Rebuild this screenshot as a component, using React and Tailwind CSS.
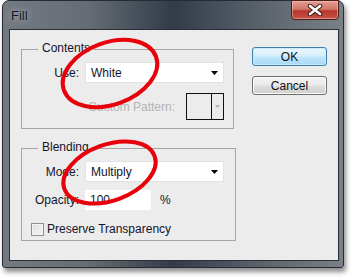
import React from 'react';

function Dropdown({ value }) {
  return (
    <div className="w-[139px] h-[21px] bg-white border border-[#e2e2e2] flex items-center pl-[5px] pr-[5px]">
      <span className="flex-1 text-[12px] leading-[14px] text-[#14142a]">{value}</span>
      <svg width="7" height="4" viewBox="0 0 7 4">
        <path d="M0 0 H7 L3.5 4 Z" fill="#000" />
      </svg>
    </div>
  );
}

function Group({ title, className, children }) {
  return (
    <div className={`relative border border-[#a6a6a6] ${className}`}>
      <span className="absolute -top-[9px] left-[16px] px-[4px] bg-[#ececec] text-[12px] leading-[14px] text-[#14142a]">
        {title}
      </span>
      {children}
    </div>
  );
}

export default function App() {
  return (
    <div className="relative w-[354px] h-[278px] bg-white overflow-hidden font-['Liberation_Sans',Arial,sans-serif]">
      <div className="ml-[2px] w-[342px] h-[268px] rounded-t-[7px] rounded-b-[3px] border border-[#262b31] bg-[linear-gradient(90deg,#747a82_0%,#656c75_25%,#323c47_50%,#59616b_75%,#7a8087_100%)] shadow-[2px_4px_5px_rgba(0,0,0,0.45)] flex flex-col">
        {/* title bar */}
        <div className="h-[28px] flex items-start">
          <span className="pl-[8px] pt-[7px] text-[13px] leading-[15px] text-[#16162a] [text-shadow:0_0_6px_rgba(220,225,230,0.9)]">
            Fill
          </span>
          <div className="ml-auto mr-[4px] -mt-[1px] w-[48px] h-[20px] rounded-b-[4px] border border-[#4a201c] bg-[linear-gradient(180deg,#e39d92_0%,#d2776b_45%,#b8362b_55%,#c45448_100%)] flex items-center justify-center shadow-[inset_0_0_0_1px_rgba(255,200,190,0.5)]">
            <svg width="16" height="12" viewBox="0 0 16 12">
              <path d="M3 2 L13 10 M13 2 L3 10" stroke="#3a1512" strokeWidth="4.5" strokeLinecap="round" />
              <path d="M3 2 L13 10 M13 2 L3 10" stroke="#fff" strokeWidth="2.6" strokeLinecap="round" />
            </svg>
          </div>
        </div>

        {/* content */}
        <div className="ml-[6px] w-[330px] h-[232px] border border-[#2a2f35] bg-[#ececec] flex">
          <div className="pl-[11px] pt-[19px] flex flex-col gap-[19px]">
            <Group title="Contents" className="w-[213px] h-[80px]">
              <div className="flex items-center pt-[12px]">
                <span className="w-[57px] text-right text-[12px] text-[#14142a]">Use:</span>
                <div className="ml-[6px]">
                  <Dropdown value="White" />
                </div>
              </div>
              <div className="flex items-center justify-end pr-[9px] mt-[10px] gap-[11px]">
                <span className="text-[12px] text-[#b4b4b4]">Custom Pattern:</span>
                <div className="w-[38px] h-[27px] border border-[#111] flex">
                  <div className="w-[25px] border-r border-[#111]"></div>
                  <div className="flex-1 flex items-center justify-center">
                    <svg width="5" height="3" viewBox="0 0 5 3">
                      <path d="M0 0 H5 L2.5 3 Z" fill="#b0b0b0" />
                    </svg>
                  </div>
                </div>
              </div>
            </Group>

            <Group title="Blending" className="w-[215px] h-[93px]">
              <div className="flex items-center pt-[12px]">
                <span className="w-[57px] text-right text-[12px] text-[#14142a]">Mode:</span>
                <div className="ml-[6px]">
                  <Dropdown value="Multiply" />
                </div>
              </div>
              <div className="flex items-center mt-[8px]">
                <span className="w-[57px] text-right text-[12px] text-[#14142a]">Opacity:</span>
                <div className="ml-[6px] w-[66px] h-[20px] bg-white flex items-center pl-[5px] text-[12px] text-[#14142a]">
                  100
                </div>
                <span className="ml-[9px] text-[12px] text-[#14142a]">%</span>
              </div>
              <div className="flex items-center mt-[10px] pl-[9px] gap-[3px]">
                <div className="w-[13px] h-[13px] border border-[#8e8f8f] bg-[linear-gradient(135deg,#dcdcdc,#f6f6f6)] shadow-[inset_0_0_0_1px_#f4f4f4]"></div>
                <span className="text-[12px] text-[#14142a]">Preserve Transparency</span>
              </div>
            </Group>
          </div>

          <div className="ml-[16px] pt-[17px] flex flex-col gap-[10px]">
            <button className="w-[75px] h-[19px] rounded-[3px] border border-[#3c7fb1] bg-[linear-gradient(180deg,#eaf6fd_0%,#d9f0fc_45%,#bee6fd_55%,#a7d9f5_100%)] shadow-[inset_0_0_0_1px_#c8ecfb] text-[12px] leading-[14px] text-[#111]">
              OK
            </button>
            <button className="w-[75px] h-[19px] rounded-[3px] border border-[#707070] bg-[linear-gradient(180deg,#f2f2f2_0%,#ebebeb_45%,#dddddd_55%,#cfcfcf_100%)] shadow-[inset_0_0_0_1px_#fafafa] text-[12px] leading-[14px] text-[#111]">
              Cancel
            </button>
          </div>
        </div>
      </div>

      {/* red annotation circles */}
      <svg className="absolute inset-0 pointer-events-none" width="354" height="278" viewBox="0 0 354 278">
        <ellipse cx="110" cy="73.5" rx="49" ry="31" transform="rotate(-20 110 73.5)" fill="none" stroke="#e8000a" strokeWidth="4" />
        <ellipse cx="109.5" cy="172.5" rx="48" ry="28" transform="rotate(-20 109.5 172.5)" fill="none" stroke="#e8000a" strokeWidth="4" />
      </svg>
    </div>
  );
}
